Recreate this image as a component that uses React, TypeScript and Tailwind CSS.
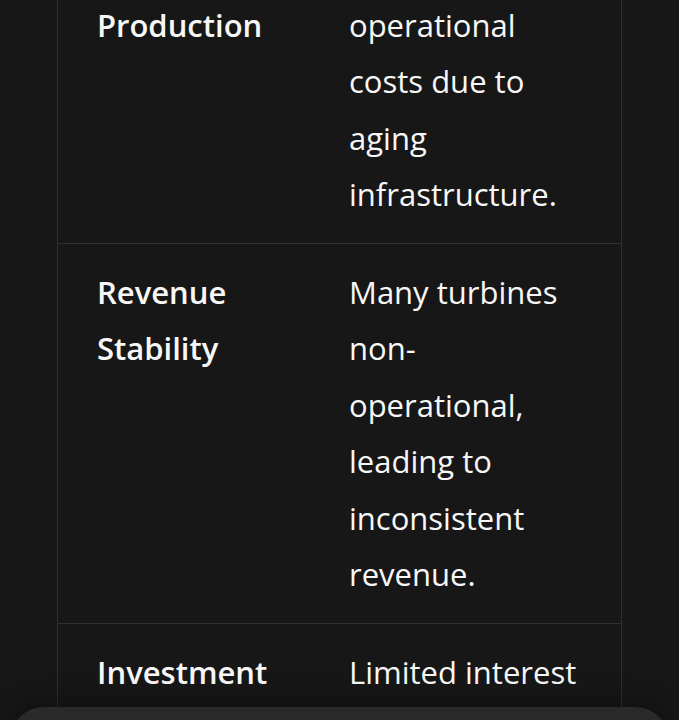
const rows = [
  {
    label: 'Energy Production',
    detail: 'Increased operational costs due to aging infrastructure.',
  },
  {
    label: 'Revenue Stability',
    detail: 'Many turbines non-operational, leading to inconsistent revenue.',
  },
  {
    label: 'Investment',
    detail: 'Limited interest from investors due to outdated equipment.',
  },
];

export default function App() {
  return (
    <main
      className="relative h-[720px] w-[679px] overflow-hidden bg-[#171717] text-[#f7f7f7]"
      style={{ fontFamily: '"Open Sans", Lato, sans-serif' }}
    >
      {/* table, scrolled so the first row is partly hidden */}
      <div className="ml-[57px] -mt-[80px] w-[565px] border-x border-[#2f2f2f]">
        {rows.map((row) => (
          <div
            key={row.label}
            className="grid grid-cols-[251px_312px] border-b border-[#2f2f2f] text-[31px] leading-[56.5px]"
          >
            <div className="px-[39px] py-5 font-semibold">{row.label}</div>
            <div className="px-10 py-5">{row.detail}</div>
          </div>
        ))}
      </div>

      {/* bottom sheet */}
      <div className="absolute left-[10px] right-[10px] top-[707px] h-[80px] rounded-t-[34px] bg-[#2a2a2a] shadow-[0_-6px_24px_rgba(0,0,0,0.35)]" />
    </main>
  );
}
